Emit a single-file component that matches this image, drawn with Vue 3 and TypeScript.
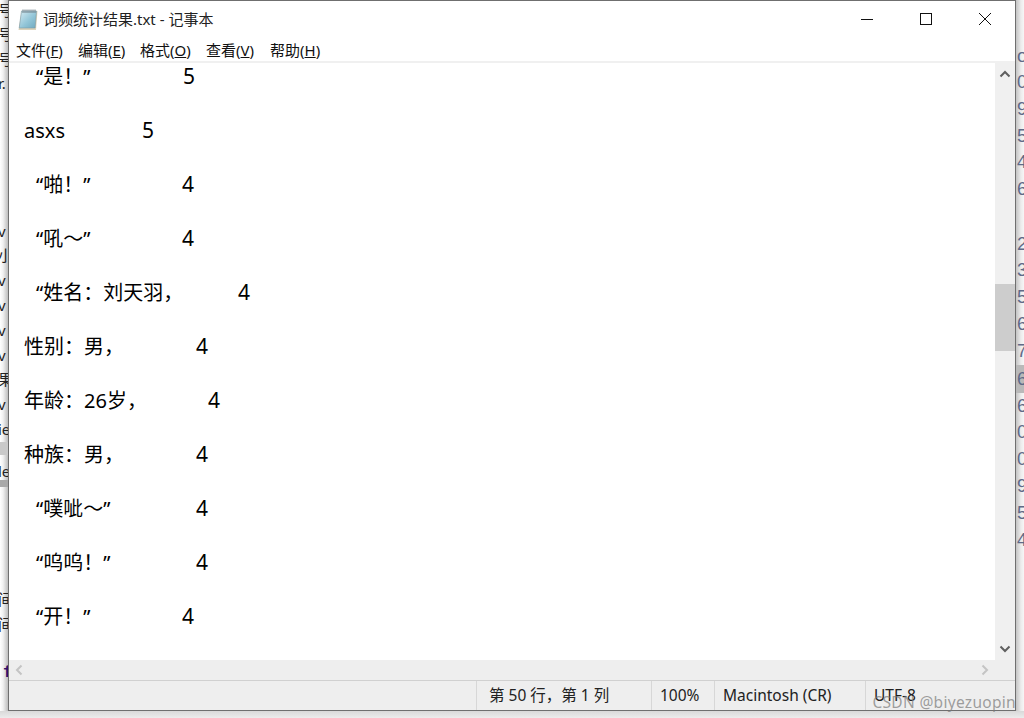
<script setup lang="ts">
interface Row { label: string; indent: number; numX: number; value: string }
interface Peek { text: string; top: number }

const rows: Row[] = [
  { label: '“是！”', indent: 12, numX: 183, value: '5' },
  { label: 'asxs', indent: 0, numX: 142, value: '5' },
  { label: '“啪！”', indent: 12, numX: 182, value: '4' },
  { label: '“吼～”', indent: 12, numX: 182, value: '4' },
  { label: '“姓名：刘天羽，', indent: 12, numX: 238, value: '4' },
  { label: '性别：男，', indent: 0, numX: 196, value: '4' },
  { label: '年龄：26岁，', indent: 0, numX: 208, value: '4' },
  { label: '种族：男，', indent: 0, numX: 196, value: '4' },
  { label: '“噗呲～”', indent: 12, numX: 196, value: '4' },
  { label: '“呜呜！”', indent: 12, numX: 196, value: '4' },
  { label: '“开！”', indent: 12, numX: 182, value: '4' },
]
const textLeft = 24

const menus = [
  { name: '文件', key: 'F' },
  { name: '编辑', key: 'E' },
  { name: '格式', key: 'O' },
  { name: '查看', key: 'V' },
  { name: '帮助', key: 'H' },
]

const leftPeek: Peek[] = [
  { text: '号', top: 0 }, { text: '号', top: 24 }, { text: '号', top: 49 }, { text: 'r.', top: 73 },
  { text: 'v', top: 221 }, { text: '小', top: 245 }, { text: 'v', top: 270 }, { text: 'v', top: 295 },
  { text: 'v', top: 320 }, { text: 'v', top: 345 }, { text: '果', top: 369 }, { text: 'v', top: 394 },
  { text: 'ie', top: 419 }, { text: 'le', top: 461 }, { text: '间', top: 589 }, { text: '间', top: 614 },
]
const rightPeek: Peek[] = [
  { text: 'o', top: 46 }, { text: '0', top: 72 }, { text: '9', top: 99 }, { text: '5', top: 126 },
  { text: '4', top: 152 }, { text: '6', top: 179 }, { text: '2', top: 234 }, { text: '3', top: 260 },
  { text: '5', top: 287 }, { text: '6', top: 314 }, { text: '7', top: 341 }, { text: '6', top: 369 },
  { text: '6', top: 396 }, { text: '0', top: 422 }, { text: '0', top: 449 }, { text: '9', top: 476 },
  { text: '5', top: 503 }, { text: '4', top: 530 },
]
</script>

<template>
  <div class="stage">
    <div class="peek-left">
      <span class="band band-a"></span>
      <span class="band band-b"></span>
      <span v-for="p in leftPeek" :key="p.top" class="peek-ch" :style="{ top: p.top + 'px' }">{{ p.text }}</span>
      <span class="peek-f">f</span>
    </div>
    <div class="peek-right">
      <span class="band-right"></span>
      <span v-for="p in rightPeek" :key="p.top" class="peek-num" :style="{ top: p.top + 'px' }">{{ p.text }}</span>
    </div>

    <div class="window">
      <header class="titlebar">
        <svg class="app-icon" width="20" height="21" viewBox="0 0 20 21">
          <defs>
            <linearGradient id="page" x1="0" y1="0" x2="1" y2="1">
              <stop offset="0" stop-color="#d6ebf2" />
              <stop offset="0.55" stop-color="#93c6d8" />
              <stop offset="1" stop-color="#6fa9bf" />
            </linearGradient>
          </defs>
          <path d="M3.5 2h16l-1.5 19H0.5z" fill="#dcd3bb" />
          <path d="M3.5 2h15l-1.4 17H1.2z" fill="url(#page)" stroke="#7d9aa6" stroke-width="0.6" />
          <path d="M5 0.5v3.5M7 0.5v3.5M9 0.5v3.5M11 0.5v3.5M13 0.5v3.5M15 0.5v3.5M17 0.5v3.5" stroke="#6f7f88" stroke-width="1" />
        </svg>
        <span class="title">词频统计结果.txt - 记事本</span>
        <div class="controls">
          <svg width="14" height="14" viewBox="0 0 14 14" class="ctl ctl-min"><path d="M1 7.5h12" stroke="#111" stroke-width="1" /></svg>
          <svg width="14" height="14" viewBox="0 0 14 14" class="ctl ctl-max"><rect x="1.5" y="1.5" width="11" height="11" fill="none" stroke="#111" stroke-width="1" /></svg>
          <svg width="14" height="14" viewBox="0 0 14 14" class="ctl ctl-close"><path d="M1 1l12 12M13 1L1 13" stroke="#111" stroke-width="1" /></svg>
        </div>
      </header>

      <nav class="menubar">
        <span v-for="m in menus" :key="m.key" class="menu">{{ m.name }}(<u>{{ m.key }}</u>)</span>
      </nav>

      <div class="middle">
        <main class="editor">
          <div v-for="r in rows" :key="r.label" class="row">
            <span class="label" :style="{ width: r.numX - textLeft + 'px', paddingLeft: r.indent + 'px' }">{{ r.label }}</span>
            <span class="value">{{ r.value }}</span>
          </div>
        </main>
        <aside class="vscroll">
          <svg class="arrow" width="12" height="8" viewBox="0 0 12 8"><path d="M1.5 6.5L6 2l4.5 4.5" fill="none" stroke="#5f5f5f" stroke-width="2" /></svg>
          <div class="track"><div class="thumb"></div></div>
          <svg class="arrow" width="12" height="8" viewBox="0 0 12 8"><path d="M1.5 1.5L6 6l4.5-4.5" fill="none" stroke="#5f5f5f" stroke-width="2" /></svg>
        </aside>
      </div>

      <div class="hscroll">
        <svg width="8" height="12" viewBox="0 0 8 12"><path d="M6.5 1.5L2 6l4.5 4.5" fill="none" stroke="#c4c4c4" stroke-width="2" /></svg>
        <svg width="8" height="12" viewBox="0 0 8 12"><path d="M1.5 1.5L6 6l-4.5 4.5" fill="none" stroke="#c4c4c4" stroke-width="2" /></svg>
      </div>

      <footer class="statusbar">
        <span class="cell cell-spacer"></span>
        <span class="cell cell-pos">第 50 行，第 1 列</span>
        <span class="cell cell-zoom">100%</span>
        <span class="cell cell-eol">Macintosh (CR)</span>
        <span class="cell cell-enc">UTF-8</span>
      </footer>
    </div>

    <div class="watermark">CSDN @biyezuopin</div>
  </div>
</template>

<style scoped>
.stage {
  position: relative;
  width: 1024px;
  height: 718px;
  overflow: hidden;
  background: linear-gradient(#fff 0 711px, #d9d9d9 711px, #ececec 718px);
  font-family: "Noto Sans", "Noto Sans CJK SC", sans-serif;
  color: #111;
}
.peek-left {
  position: absolute;
  left: 0;
  top: 0;
  width: 8px;
  height: 711px;
  overflow: hidden;
  background: linear-gradient(90deg, #fff 0, #f1f1f1 3px, #bdbdbd 8px);
  font-size: 15px;
  line-height: 20px;
}
.peek-ch {
  position: absolute;
  left: -2px;
  color: #222;
  white-space: nowrap;
}
.peek-f {
  position: absolute;
  left: 3px;
  top: 662px;
  font: bold 17px/22px "Liberation Mono", monospace;
  color: #30106e;
}
.band {
  position: absolute;
  left: 0;
  width: 8px;
}
.band-a {
  top: 442px;
  height: 13px;
  background: #c9c9c9;
}
.band-b {
  top: 480px;
  height: 7px;
  background: #a9a9a9;
}
.peek-right {
  position: absolute;
  left: 1016px;
  top: 0;
  width: 8px;
  height: 711px;
  overflow: hidden;
  background: linear-gradient(90deg, #c4c4c4 0, #ececec 5px, #f6f6f6 8px);
  font: 18px/20px "Liberation Sans", sans-serif;
}
.peek-num {
  position: absolute;
  left: 1px;
  color: #5f6a88;
}
.band-right {
  position: absolute;
  left: 0;
  top: 365px;
  width: 8px;
  height: 28px;
  background: #b9b9b9;
}
.window {
  position: absolute;
  left: 8px;
  top: 0;
  width: 1008px;
  height: 711px;
  box-sizing: border-box;
  border: 1px solid #6f6f6f;
  background: #fff;
  display: flex;
  flex-direction: column;
}
.titlebar {
  height: 38px;
  flex: none;
  display: flex;
  align-items: flex-start;
  background: #fff;
}
.app-icon {
  margin: 8px 0 0 9px;
  flex: none;
}
.title {
  margin: 7px 0 0 5px;
  font-size: 15px;
  line-height: 22px;
  color: #222;
}
.controls {
  margin-left: auto;
  display: flex;
  padding-top: 11px;
  padding-right: 23px;
}
.ctl-max {
  margin-left: 45px;
}
.ctl-close {
  margin-left: 45px;
}
.menubar {
  height: 22px;
  flex: none;
  display: flex;
  padding-left: 7px;
  font-size: 15px;
  line-height: 22px;
  color: #111;
  border-bottom: 2px solid #f0f0f0;
}
.menu {
  width: 62px;
  white-space: nowrap;
}
.menu:nth-child(3) {
  width: 66px;
}
.menu:nth-child(4) {
  width: 64px;
}
.middle {
  flex: none;
  height: 597px;
  display: flex;
}
.editor {
  flex: 1;
  overflow: hidden;
  padding-left: 15px;
  font-size: 20px;
  line-height: 27px;
  color: #000;
  font-family: "Noto Sans", "Noto Sans CJK SC", sans-serif;
}
.row {
  height: 54px;
  display: flex;
  white-space: pre;
}
.label {
  flex: none;
  box-sizing: border-box;
}
.value {
  font-size: 21px;
}
.vscroll {
  width: 20px;
  flex: none;
  background: #f0f0f0;
  display: flex;
  flex-direction: column;
  align-items: center;
}
.arrow {
  flex: none;
  margin: 7px 0;
}
.track {
  flex: 1;
  width: 100%;
}
.thumb {
  margin-top: 199px;
  height: 67px;
  background: #cdcdcd;
}
.hscroll {
  height: 20px;
  flex: none;
  background: #eeeeee;
  display: flex;
  align-items: center;
  justify-content: space-between;
  padding: 0 26px 0 6px;
  border-bottom: 1px solid #d0d0d0;
}
.statusbar {
  flex: 1;
  min-height: 0;
  background: #eeeeee;
  display: flex;
  font-size: 15.5px;
  line-height: 28px;
  color: #222;
}
.cell {
  flex: none;
  box-sizing: border-box;
  border-left: 1px solid #d7d7d7;
  padding-left: 12px;
  white-space: nowrap;
}
.cell-spacer {
  width: 467px;
  border-left: 0;
}
.cell-pos {
  width: 175px;
}
.cell-zoom {
  width: 63px;
  padding-left: 8px;
}
.cell-eol {
  width: 151px;
  padding-left: 8px;
}
.cell-enc {
  flex: 1;
  padding-left: 8px;
}
.watermark {
  position: absolute;
  right: 8px;
  bottom: 7px;
  font-size: 15.5px;
  line-height: 18px;
  letter-spacing: 0.3px;
  color: rgba(120, 120, 120, 0.7);
  white-space: nowrap;
}
</style>

<style>
html,
body {
  margin: 0;
  background: #fff;
}
</style>
